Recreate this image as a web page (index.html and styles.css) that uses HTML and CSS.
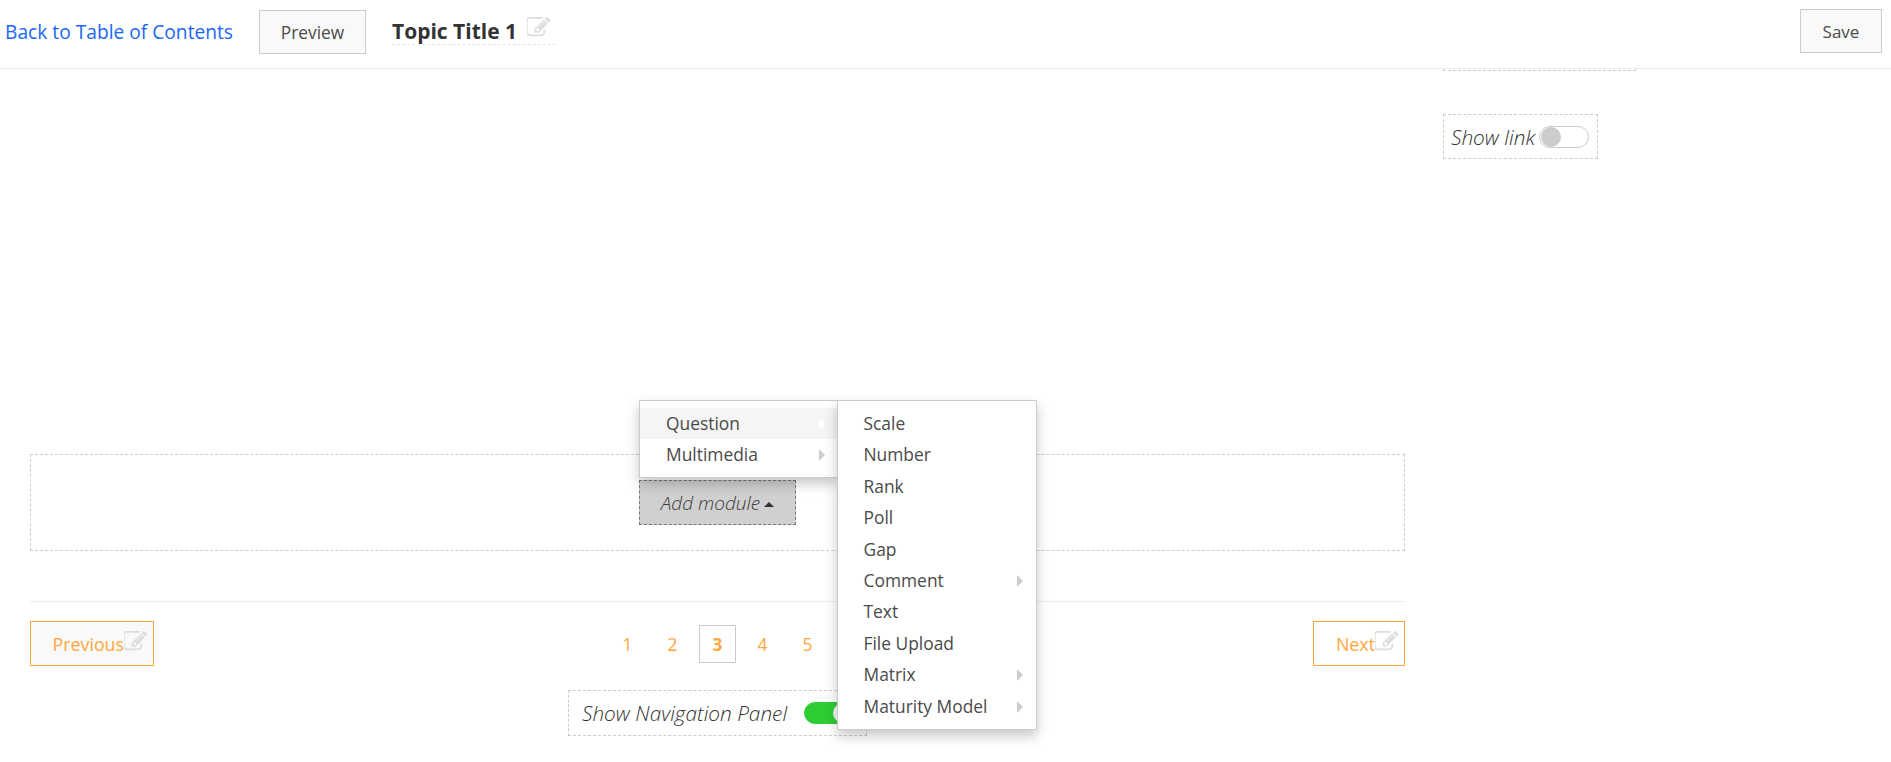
FILE: index.html
```html
<!DOCTYPE html>
<html lang="en">
<head>
<meta charset="utf-8">
<title>Topic Title 1</title>
<link rel="stylesheet" href="styles.css">
</head>
<body>
<svg class="defs" aria-hidden="true"><symbol id="edit" viewBox="128 128 1664 1536"><path d="M888 1184l116-116-152-152-116 116v56h96v96h56zm440-720q-16-16-33 1l-350 350q-17 17-1 33t33-1l350-350q17-17 1-33zm80 594v190q0 119-84.5 203.5t-203.5 84.5h-832q-119 0-203.5-84.5t-84.5-203.5v-832q0-119 84.5-203.5t203.5-84.5h832q63 0 117 25 15 7 18 23 3 17-9 29l-49 49q-14 14-32 8-23-6-45-6h-832q-66 0-113 47t-47 113v832q0 66 47 113t113 47h832q66 0 113-47t47-113v-126q0-13 9-22l64-64q15-15 35-7t20 29zm-96-738l288 288-672 672h-288v-288zm444 132l-92 92-288-288 92-92q28-28 68-28t68 28l152 152q28 28 28 68t-28 68z"/></symbol></svg>
<header class="topbar">
  <a class="back-link" href="#">Back to Table of Contents</a>
  <button class="btn preview-btn">Preview</button>
  <div class="title-wrap">
    <span class="topic-title">Topic Title 1</span>
    <svg class="edit-icon title-icon"><use href="#edit"/></svg>
  </div>
  <button class="btn save-btn">Save</button>
</header>
<div class="page">
  <main class="main">
    <section class="module-zone">
      <div class="add-wrap">
        <div class="menu">
          <div class="menu-item active">Question<span class="arrow pale"></span></div>
          <div class="menu-item">Multimedia<span class="arrow"></span></div>
          <div class="menu sub">
            <div class="menu-item">Scale</div>
            <div class="menu-item">Number</div>
            <div class="menu-item">Rank</div>
            <div class="menu-item">Poll</div>
            <div class="menu-item">Gap</div>
            <div class="menu-item">Comment<span class="arrow"></span></div>
            <div class="menu-item">Text</div>
            <div class="menu-item">File Upload</div>
            <div class="menu-item">Matrix<span class="arrow"></span></div>
            <div class="menu-item">Maturity Model<span class="arrow"></span></div>
          </div>
        </div>
        <button class="add-btn">Add module<span class="caret"></span></button>
      </div>
    </section>
    <nav class="pager-row">
      <div class="prev-cell">
        <button class="nav-btn prev">Previous<svg class="edit-icon"><use href="#edit"/></svg></button>
      </div>
      <div class="pager">
        <a class="page-num">1</a>
        <a class="page-num">2</a>
        <a class="page-num current">3</a>
        <a class="page-num">4</a>
        <a class="page-num">5</a>
      </div>
      <div class="next-cell">
        <button class="nav-btn next">Next<svg class="edit-icon"><use href="#edit"/></svg></button>
      </div>
    </nav>
    <div class="panel-row">
      <div class="toggle-box panel-box">
        <span class="toggle-label">Show Navigation Panel</span>
        <span class="switch on"><span class="knob"></span></span>
      </div>
    </div>
  </main>
  <aside class="side">
    <div class="side-stub"></div>
    <div class="toggle-box link-box">
      <span class="toggle-label">Show link</span>
      <span class="switch"><span class="knob"></span></span>
    </div>
  </aside>
</div>
</body>
</html>
```
FILE: styles.css
```css
* { box-sizing: border-box; }
html, body { height: 100%; }
body {
  margin: 0;
  overflow: hidden;
  background: #fff;
  color: #444;
  font-family: "Open Sans", "Liberation Sans", sans-serif;
  font-size: 16px;
}
button { font-family: inherit; }
.defs { display: none; }

.topbar {
  display: flex;
  align-items: center;
  height: 69px;
  padding: 0 9px 0 5px;
  border-bottom: 1px solid #eee;
}
.back-link {
  color: #1a66f5;
  font-size: 19.2px;
  text-decoration: none;
  margin-top: -6px;
  white-space: nowrap;
}
.btn {
  height: 44px;
  background: #f9f9f9;
  border: 1px solid #ccc;
  color: #4a4a4a;
  font-size: 17.3px;
  padding: 0;
}
.preview-btn { width: 107px; margin-left: 26px; margin-top: -4px; }
.save-btn { width: 82px; margin-left: auto; margin-top: -6px; font-size: 17px; }
.title-wrap {
  display: flex;
  align-items: flex-end;
  width: 164px;
  height: 38px;
  margin-left: 26px;
  margin-top: -16px;
  border-bottom: 1px dashed #e6e6e6;
}
.topic-title { font-size: 21px; font-weight: 700; color: #333; line-height: 26px; white-space: nowrap; }
.edit-icon { width: 24px; height: 21px; fill: #ddd; flex: none; }
.title-icon { margin-left: 10px; margin-bottom: 6px; }

.page { display: flex; padding-left: 30px; }
.main { width: 1375px; padding-top: 385px; flex: none; }
.side { margin-left: 38px; width: 193px; }
.side-stub {
  height: 2px;
  border: 1px dashed #ccc;
  border-top: 0;
}

.module-zone {
  display: flex;
  justify-content: center;
  align-items: flex-start;
  height: 97px;
  padding-top: 25px;
  border: 1px dashed #ccc;
}
.add-wrap { position: relative; width: 157px; height: 45px; }
.add-btn {
  display: block;
  width: 157px;
  height: 45px;
  padding: 0;
  background: #d0d0d0;
  border: 1px dashed #777;
  color: #3a3a3a;
  font-size: 19px;
  font-weight: 300;
  font-style: italic;
}
.caret {
  display: inline-block;
  margin-left: 4px;
  vertical-align: 3px;
  border: 5px solid transparent;
  border-top: 0;
  border-bottom-color: #333;
}
.menu {
  position: absolute;
  z-index: 10;
  left: 0;
  bottom: 47px;
  width: 199px;
  padding: 7px 0;
  background: #fff;
  border: 1px solid #ccc;
  box-shadow: 0 6px 12px rgba(0, 0, 0, 0.22);
}
.menu-item {
  position: relative;
  height: 31px;
  line-height: 31px;
  padding-left: 26px;
  font-size: 17.4px;
  color: #4a4a4a;
}
.menu.sub {
  left: 197px;
  top: -1px;
  bottom: auto;
  width: 200px;
  height: 330px;
}
.menu.sub .menu-item { height: 31.4px; line-height: 31.4px; padding-left: 25.5px; }
.menu-item.active { background: #f5f5f5; }
.arrow {
  position: absolute;
  right: 12px;
  top: 10px;
  border: 6px solid transparent;
  border-right: 0;
  border-left-color: #ccc;
}
.menu.sub .arrow { right: 13px; }
.arrow.pale { border-left-color: #fff; }

.pager-row {
  display: grid;
  grid-template-columns: 1fr auto 1fr;
  align-items: center;
  margin-top: 50px;
  padding-top: 19px;
  border-top: 1px solid #eee;
}
.next-cell { display: flex; justify-content: flex-end; }
.nav-btn {
  display: flex;
  align-items: center;
  justify-content: flex-end;
  height: 45px;
  padding: 0 5px 0 0;
  background: #fff;
  border: 1px solid #ffa63d;
  color: #ffa63d;
  font-size: 17.8px;
}
.nav-btn .edit-icon { margin-top: -4px; }
.prev { width: 124px; background: #f9f9f9; }
.next { width: 92px; }
.pager { display: flex; gap: 8px; }
.page-num {
  width: 37px;
  height: 38px;
  line-height: 36px;
  text-align: center;
  color: #ffa63d;
  font-size: 17.4px;
  border: 1px solid transparent;
}
.page-num.current { border-color: #ccc; font-weight: 700; }

.panel-row { display: flex; justify-content: center; margin-top: 24px; }
.toggle-box {
  display: inline-flex;
  align-items: center;
  height: 46px;
  border: 1px dashed #ccc;
}
.toggle-label { font-style: italic; font-weight: 300; font-size: 20.8px; color: #333; white-space: nowrap; }
.panel-box { width: 299px; padding-left: 13px; }
.panel-box .switch { margin-left: 17px; }
.link-box { width: 155px; height: 45px; margin-top: 43px; padding-left: 7px; }
.link-box .switch { margin-left: 4px; }
.switch {
  position: relative;
  display: inline-block;
  width: 50px;
  height: 22px;
  flex: none;
  background: #fff;
  border: 1px solid #ccc;
  border-radius: 11px;
}
.knob {
  position: absolute;
  left: 1px;
  top: 0;
  width: 20px;
  height: 20px;
  border-radius: 50%;
  background: #ccc;
}
.switch.on { background: #2ecc33; border-color: #2ecc33; }
.switch.on .knob { left: 28px; background: #f5f5f5; }
```
